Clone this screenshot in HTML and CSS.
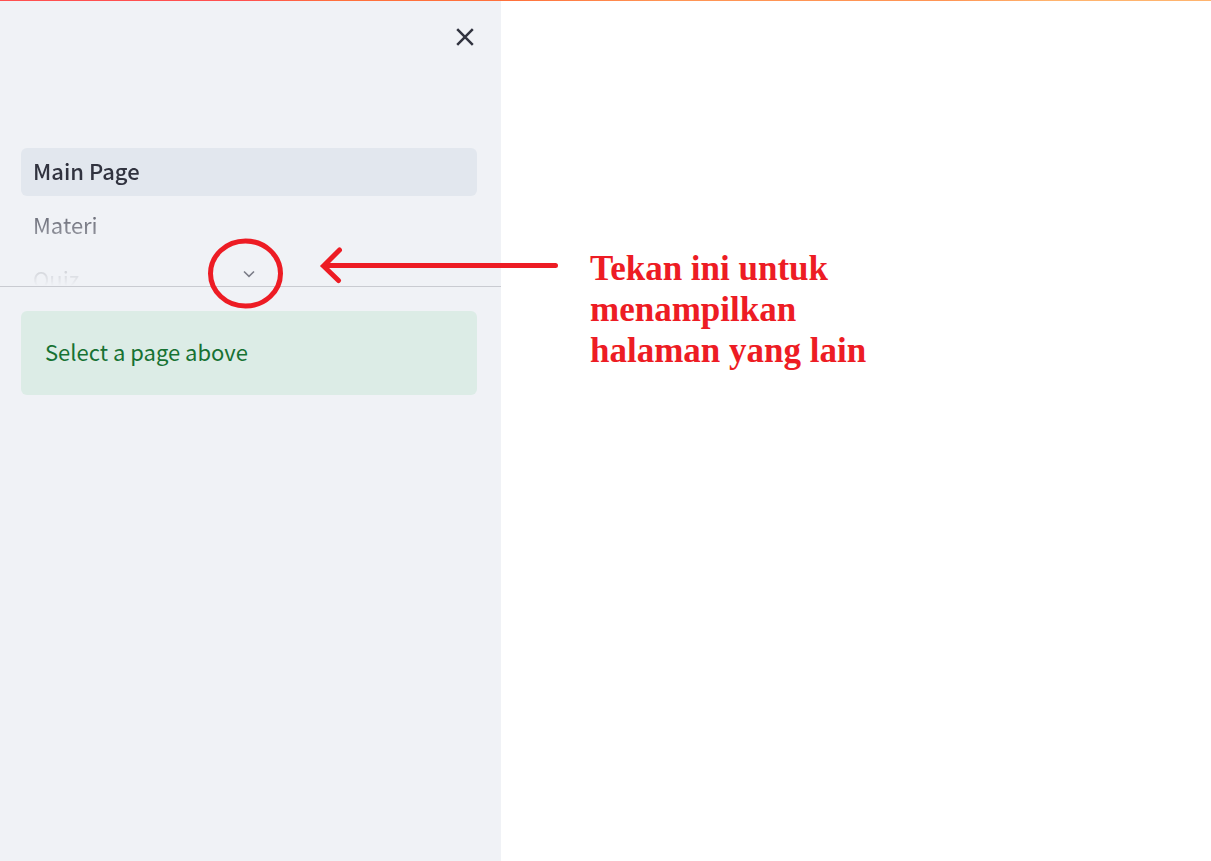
FILE: index.html
```html
<!DOCTYPE html>
<html lang="id">
<head>
<meta charset="utf-8">
<meta name="viewport" content="width=device-width, initial-scale=1">
<title>Main Page</title>
<link rel="stylesheet" href="styles.css">
</head>
<body>
<div class="decoration"></div>
<div class="app">
  <aside class="sidebar">
    <div class="sidebar-header">
      <button class="close" type="button" aria-label="Close sidebar">
        <svg width="18" height="18" viewBox="0 0 18 18"><path d="M1.200 1.200 16.800 16.800M16.800 1.200 1.200 16.800"/></svg>
      </button>
    </div>
    <nav class="pages">
      <ul class="page-list">
        <li><a class="page-link active" href="#main">Main Page</a></li>
        <li><a class="page-link" href="#materi">Materi</a></li>
        <li><a class="page-link" href="#quiz">Quiz</a></li>
      </ul>
      <button class="expand" type="button" aria-label="Show more pages">
        <svg width="12" height="8" viewBox="0 0 12 8"><path d="M1 1.500 6 6.300 11 1.500"/></svg>
      </button>
    </nav>
    <div class="alert" role="status">Select a page above</div>
  </aside>
  <main class="content">
    <p class="note">Tekan ini untuk menampilkan halaman yang lain</p>
  </main>
  <svg class="annotation" width="352" height="72" viewBox="0 0 352 72" aria-hidden="true">
    <ellipse cx="37.500" cy="35.500" rx="35" ry="32.500"/>
    <path d="M347.500 27.500H116M131.500 12 115.500 28 130.500 42.500"/>
  </svg>
</div>
</body>
</html>
```
FILE: styles.css
```css
* {
  box-sizing: border-box;
}

body {
  margin: 0;
  background: #fff;
  color: #31333f;
  font: 22px/36px "Noto Sans CJK SC", "Noto Sans", sans-serif;
}

button {
  display: flex;
  padding: 0;
  border: 0;
  background: none;
  cursor: pointer;
}

svg {
  fill: none;
}

.decoration {
  position: absolute;
  z-index: 2;
  top: 0;
  left: 0;
  right: 0;
  height: 1px;
  background: linear-gradient(90deg, #ff5050 20%, #ff713c 28%, #ff713c 42%, #ff9555 55%, #ff9555 78%, #ffb46e 87%);
}

.app {
  position: relative;
  display: flex;
  min-height: 100vh;
}

.sidebar {
  flex: 0 0 501px;
  background: #f0f2f6;
}

.sidebar-header {
  display: flex;
  justify-content: flex-end;
  height: 148px;
  padding: 28px 27px;
}

.close {
  width: 18px;
  height: 18px;
}

.close path {
  stroke: #31333f;
  stroke-width: 2.5;
}

.pages {
  position: relative;
  height: 139px;
  overflow: hidden;
  border-bottom: 1px solid #c9cbd1;
}

.page-list {
  display: flex;
  flex-direction: column;
  gap: 6px;
  height: 138px;
  margin: 0;
  padding: 0 24px 0 21px;
  overflow: hidden;
  list-style: none;
  -webkit-mask-image: linear-gradient(#000 60px, transparent);
  mask-image: linear-gradient(#000 60px, transparent);
}

.page-link {
  display: block;
  padding: 4px 12px 8px;
  border-radius: 6px;
  color: #5d5f6b;
  text-decoration: none;
}

.active {
  background: #e2e7ee;
  color: #31333f;
  font-weight: 500;
}

.expand {
  position: absolute;
  left: 50%;
  bottom: 8px;
  margin-left: -8px;
}

.expand path {
  stroke: #7b7d88;
  stroke-width: 1.6;
}

.alert {
  margin: 24px 24px 0 21px;
  padding: 22px 24px 26px;
  border-radius: 6px;
  background: #dcece6;
  color: #177233;
}

.content {
  flex: 1;
  min-width: 0;
  padding: 248px 24px 24px 89px;
}

.note {
  max-width: 300px;
  margin: 0;
  color: #ed1c24;
  font: bold 35px/41px "Liberation Serif", "Times New Roman", serif;
}

.annotation {
  position: absolute;
  top: 238px;
  left: 208px;
  stroke: #ed1c24;
  stroke-width: 5;
  stroke-linecap: round;
  pointer-events: none;
}
```
